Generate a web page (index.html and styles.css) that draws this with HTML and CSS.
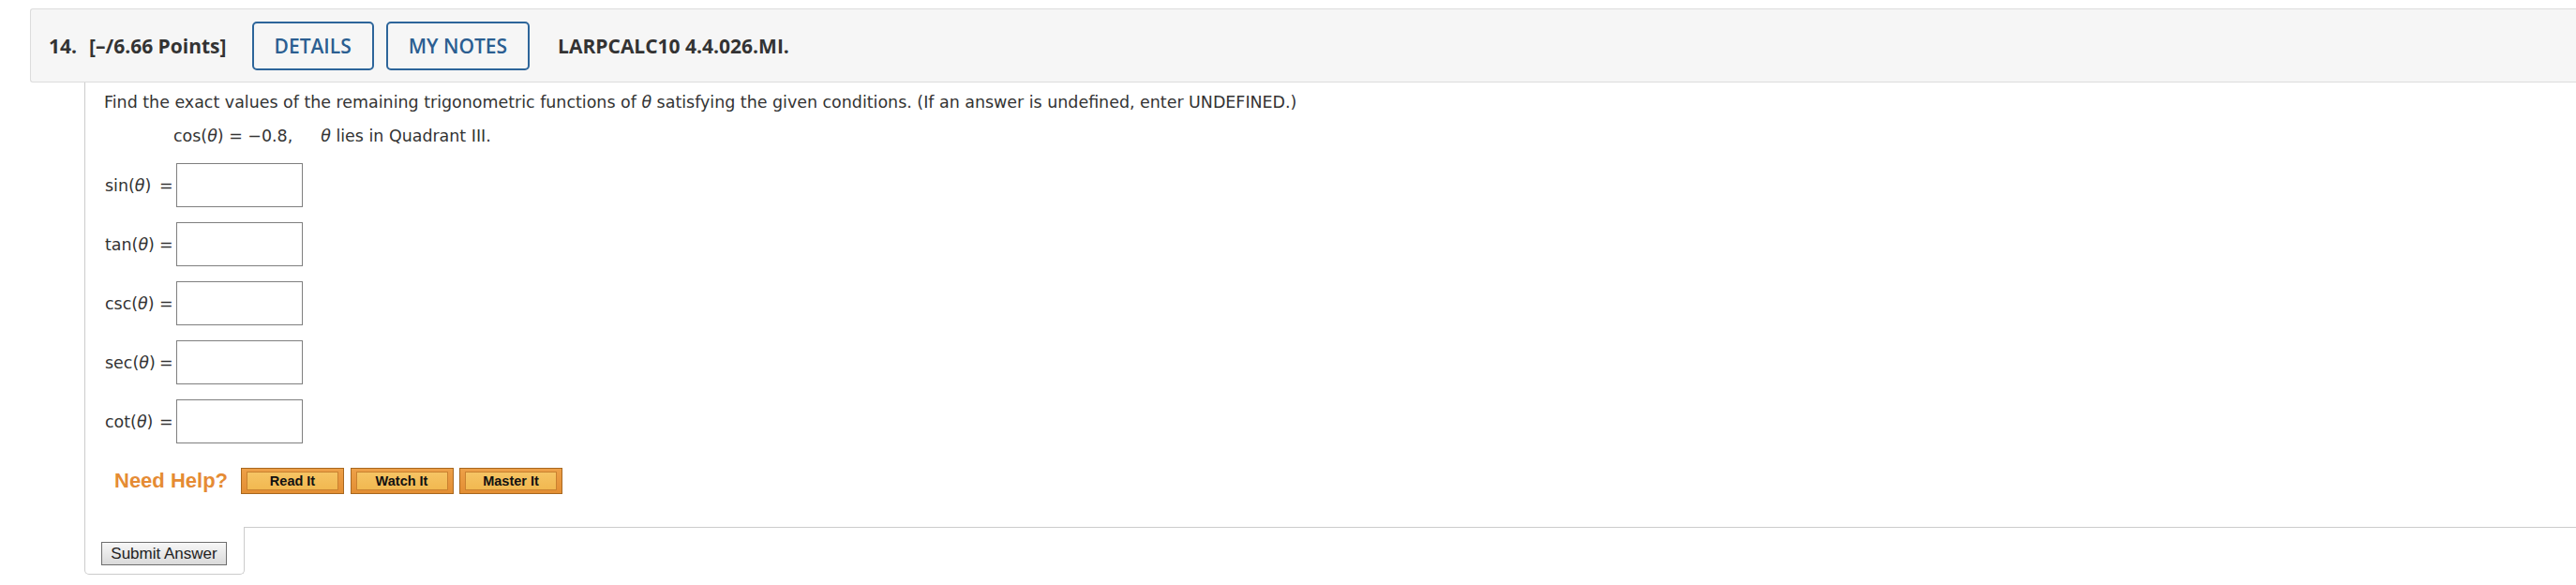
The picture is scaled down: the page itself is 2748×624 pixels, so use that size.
FILE: index.html
```html
<!DOCTYPE html>
<html lang="en">
<head>
<meta charset="utf-8">
<title>Question 14</title>
<link rel="stylesheet" href="styles.css">
</head>
<body>
<div class="page">
  <div class="qheader">
    <span class="qnum">14.</span>
    <span class="qpts">[–/6.66 Points]</span>
    <button class="hbtn">DETAILS</button>
    <button class="hbtn notes">MY NOTES</button>
    <span class="qid">LARPCALC10 4.4.026.MI.</span>
  </div>
  <div class="qbody">
    <div class="qcontent">
      <p class="prompt">Find the exact values of the remaining trigonometric functions of <i>θ</i> satisfying the given conditions. (If an answer is undefined, enter UNDEFINED.)</p>
      <p class="given"><span>cos(<i>θ</i>) = −0.8,</span><span class="cond"><i>θ</i> lies in Quadrant III.</span></p>
      <div class="answers">
        <div class="arow"><span class="alabel">sin(<i>θ</i>)</span><span class="eq">=</span><input class="abox" type="text"></div>
        <div class="arow"><span class="alabel">tan(<i>θ</i>)</span><span class="eq">=</span><input class="abox" type="text"></div>
        <div class="arow"><span class="alabel">csc(<i>θ</i>)</span><span class="eq">=</span><input class="abox" type="text"></div>
        <div class="arow"><span class="alabel">sec(<i>θ</i>)</span><span class="eq">=</span><input class="abox" type="text"></div>
        <div class="arow"><span class="alabel">cot(<i>θ</i>)</span><span class="eq">=</span><input class="abox" type="text"></div>
      </div>
      <div class="help">
        <span class="needhelp">Need Help?</span>
        <button class="hb"><span class="hbi">Read It</span></button>
        <button class="hb"><span class="hbi">Watch It</span></button>
        <button class="hb"><span class="hbi">Master It</span></button>
      </div>
    </div>
    <div class="qfooter">
      <div class="submit-cell"><button class="submit">Submit Answer</button></div>
      <div class="footer-rest"></div>
    </div>
  </div>
</div>
</body>
</html>
```

FILE: styles.css
```css
* { box-sizing: border-box; }

body {
  margin: 0;
  background: #fff;
  font-family: "DejaVu Sans", Verdana, sans-serif;
  color: #333;
  overflow: hidden;
}

.page {
  padding: 9px 0 0 32px;
}

.qheader {
  display: flex;
  align-items: center;
  height: 79px;
  background: #f6f6f6;
  border: 1px solid #dcdcdc;
  border-right: none;
  border-radius: 3px 0 0 3px;
  padding-left: 19px;
  font-family: "Open Sans", sans-serif;
  font-size: 21px;
  font-weight: 700;
  color: #333;
}

.qnum { margin-right: 13px; }
.qpts { margin-right: 27px; }

.hbtn {
  height: 52px;
  padding: 0 22px;
  border: 2px solid #2d659a;
  border-radius: 5px;
  background: transparent;
  color: #2b5e91;
  font-family: "Open Sans", sans-serif;
  font-size: 21px;
  font-weight: 600;
  margin-right: 13px;
}
.hbtn.notes { margin-right: 30px; }

.qbody {
  margin-left: 58px;
}

.qcontent {
  border-left: 1px solid #cccccc;
  padding: 11px 0 35px 20px;
  font-size: 17.45px;
}

.prompt {
  margin: 0;
  line-height: 20px;
}

.given {
  margin: 16px 0 0 74px;
  line-height: 20px;
}
.given .cond { margin-left: 30px; }

.answers {
  display: flex;
  flex-direction: column;
  gap: 16px;
  margin-top: 19px;
}

.arow {
  display: flex;
  align-items: center;
  height: 47px;
  padding-left: 1px;
}

.alabel { width: 58px; }
.eq { width: 14px; }

.abox {
  width: 135px;
  height: 47px;
  margin: 0 0 0 4px;
  border: 1px solid #7f7f7f;
  border-radius: 0;
  background: #fff;
  padding: 0 6px;
  font: 16px "DejaVu Sans", sans-serif;
}

.help {
  display: flex;
  align-items: center;
  gap: 6.5px;
  margin-top: 26px;
  padding-left: 11px;
}

.needhelp {
  font-family: "Liberation Sans", Arial, sans-serif;
  font-weight: 700;
  font-size: 22px;
  color: #e58b34;
  margin-right: 7.5px;
}

.hb {
  width: 110px;
  height: 28px;
  padding: 3px 5px;
  border: 1px solid #a8671f;
  background: linear-gradient(#eda048, #e38e33);
  display: flex;
}

.hbi {
  flex: 1;
  display: flex;
  align-items: center;
  justify-content: center;
  border: 1px solid #c98130;
  background: linear-gradient(#f6c464, #f1b850);
  font-family: "Liberation Sans", Arial, sans-serif;
  font-weight: 700;
  font-size: 14.5px;
  color: #111;
}

.qfooter {
  display: flex;
}

.submit-cell {
  width: 171px;
  border: 1px solid #cccccc;
  border-top: none;
  border-radius: 0 0 5px 5px;
  padding: 16px 0 9px 17px;
}

.footer-rest {
  flex: 1;
  border-top: 1px solid #cccccc;
}

.submit {
  display: block;
  width: 134px;
  height: 25px;
  padding: 0;
  border: 1px solid #6e6e6e;
  border-radius: 0;
  background: linear-gradient(#f7f7f7, #dadada);
  font-family: "Liberation Sans", Arial, sans-serif;
  font-size: 17px;
  color: #222;
}
```
